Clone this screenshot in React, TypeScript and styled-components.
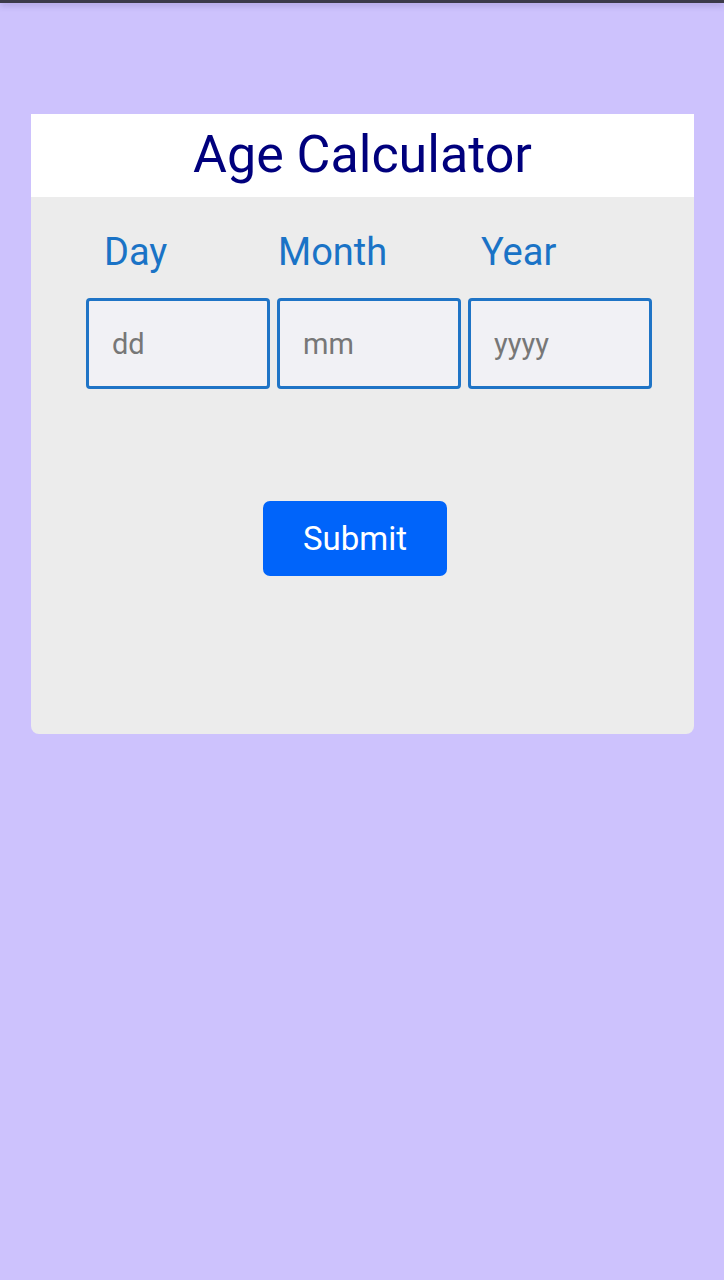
import React from "react";
import styled, { createGlobalStyle } from "styled-components";

const Global = createGlobalStyle`
  html, body { margin: 0; padding: 0; background: #cdc2fd; }
  body { font-family: Roboto, "Noto Sans", Arial, sans-serif; }
  * { box-sizing: border-box; }
`;

const Page = styled.div`
  min-height: 1280px;
  background: #cdc2fd;
  display: flex;
  flex-direction: column;
`;

const StatusBar = styled.div`
  height: 3px;
  background: #3b3a48;
  box-shadow: 0 2px 6px rgba(60, 50, 110, 0.35);
`;

const Card = styled.div`
  margin: 111px 30px 0 31px;
  background: #ececec;
  border-radius: 0 0 8px 8px;
  display: flex;
  flex-direction: column;
`;

const Header = styled.div`
  height: 83px;
  background: #ffffff;
  display: flex;
  align-items: center;
  justify-content: center;
`;

const Title = styled.h1`
  margin: 0;
  font-family: Roboto, sans-serif;
  font-weight: 400;
  font-size: 52px;
  line-height: 1;
  color: #00007d;
  transform: translateY(-1px);
`;

const Body = styled.div`
  padding: 35px 0 158px 55px;
  display: flex;
  flex-direction: column;
`;

const Row = styled.div`
  display: grid;
  grid-template-columns: repeat(3, 184px);
  column-gap: 7px;
`;

const Label = styled.label<{ $indent: number }>`
  font-size: 38px;
  line-height: 40px;
  color: #1a73c6;
  padding-left: ${(p) => p.$indent}px;
  white-space: nowrap;
`;

const Inputs = styled(Row)`
  margin-top: 26px;
`;

const Field = styled.input`
  width: 184px;
  height: 91px;
  border: 3px solid #1f74c6;
  border-radius: 4px;
  background: #f1f1f5;
  padding: 0 0 0 23px;
  font-family: Roboto, sans-serif;
  font-size: 29px;
  color: #333;
  outline: none;
  &::placeholder {
    color: #777777;
  }
`;

const ButtonRow = styled.div`
  margin-top: 112px;
  display: flex;
  padding-left: 177px;
`;

const Submit = styled.button`
  width: 184px;
  height: 75px;
  border: none;
  border-radius: 7px;
  background: #0064fa;
  color: #ffffff;
  font-family: Roboto, sans-serif;
  font-size: 33px;
  cursor: pointer;
`;

export default function App() {
  return (
    <Page>
      <Global />
      <StatusBar />
      <Card>
        <Header>
          <Title>Age Calculator</Title>
        </Header>
        <Body>
          <Row>
            <Label $indent={18}>Day</Label>
            <Label $indent={1}>Month</Label>
            <Label $indent={13}>Year</Label>
          </Row>
          <Inputs>
            <Field placeholder="dd" />
            <Field placeholder="mm" />
            <Field placeholder="yyyy" />
          </Inputs>
          <ButtonRow>
            <Submit>Submit</Submit>
          </ButtonRow>
        </Body>
      </Card>
    </Page>
  );
}
